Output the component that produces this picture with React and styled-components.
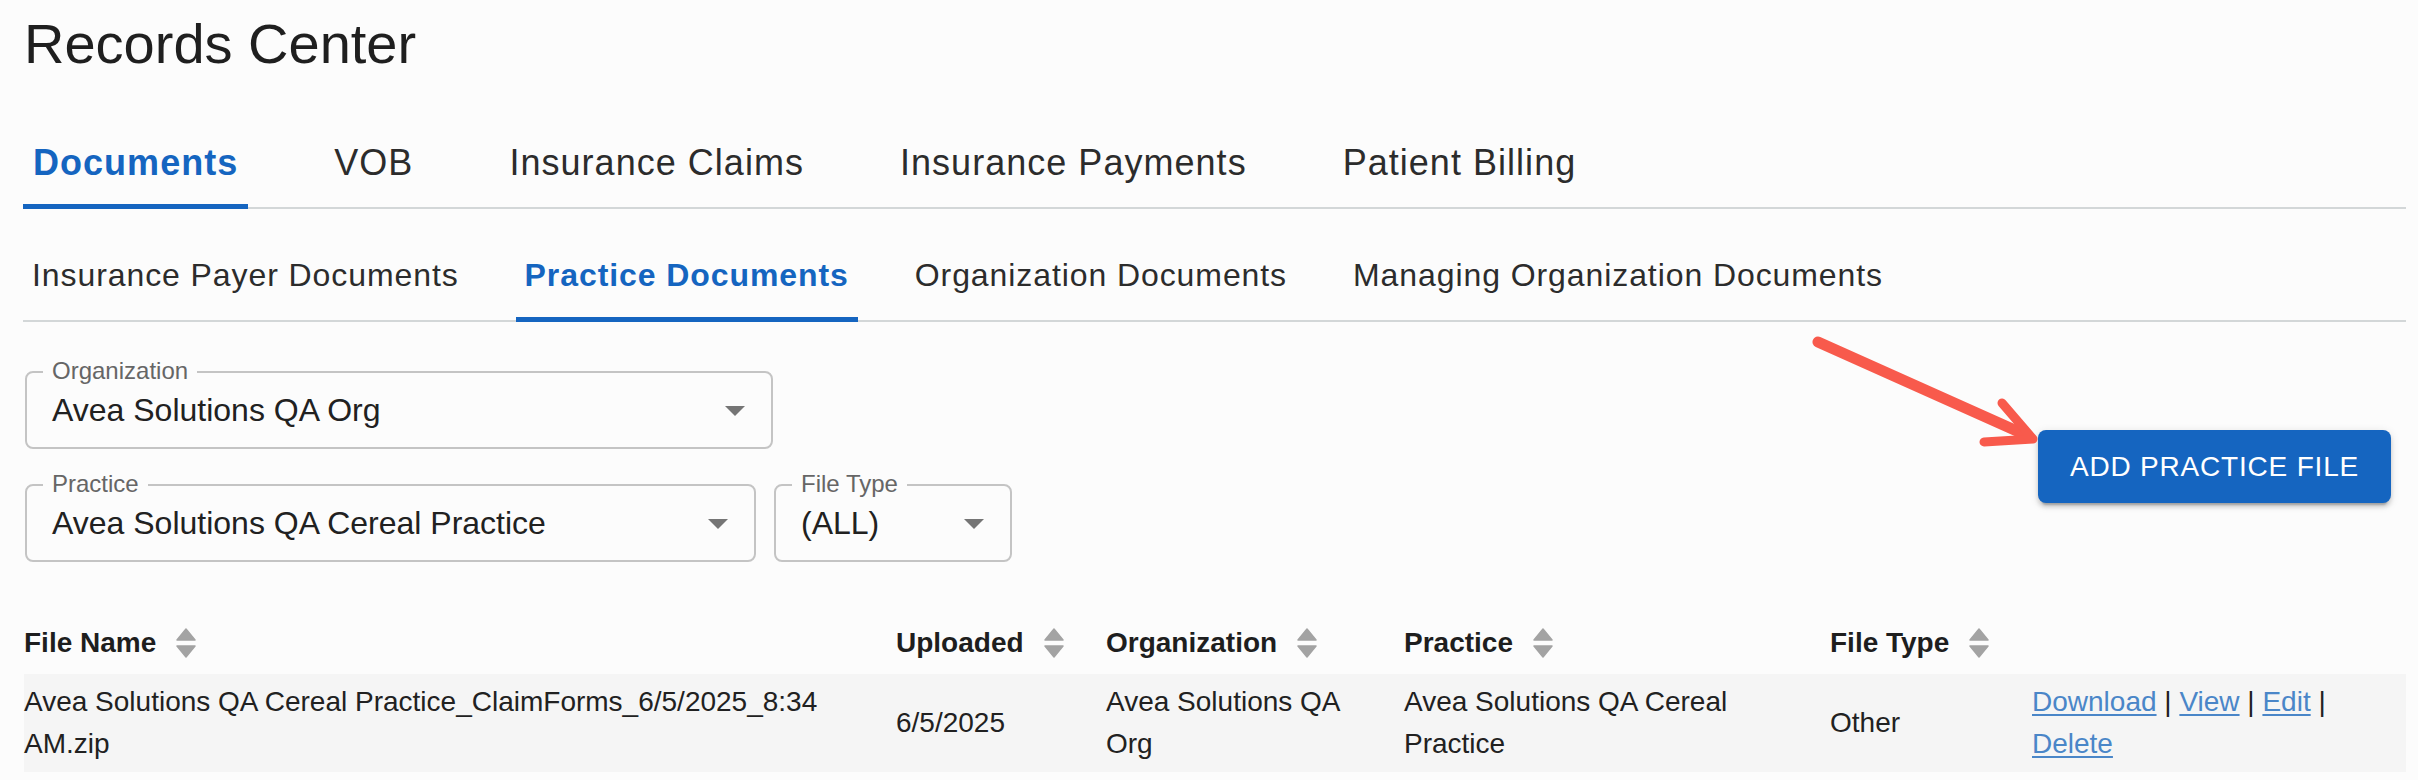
import React from "react";
import styled, { createGlobalStyle } from "styled-components";

const GlobalStyle = createGlobalStyle`
  html, body {
    margin: 0;
    padding: 0;
    background: #fcfcfc;
  }
  body {
    font-family: "Liberation Sans", Arial, Helvetica, sans-serif;
    color: #212121;
  }
  * {
    box-sizing: border-box;
  }
`;

const Page = styled.div`
  position: relative;
  width: 2418px;
  height: 780px;
  padding: 10px 12px 0 24px;
  overflow: hidden;
`;

const Title = styled.h1`
  margin: 0;
  font-size: 56px;
  font-weight: 400;
  line-height: 67px;
  color: #1f1f1f;
`;

const TabStrip = styled.div`
  display: flex;
  gap: ${(p) => p.$gap}px;
  height: 96px;
  margin-top: ${(p) => p.$top}px;
  margin-left: -1px;
  border-bottom: 2px solid #d3d7d8;
`;

const Tab = styled.div`
  position: relative;
  display: flex;
  align-items: center;
  padding: 5px ${(p) => p.$pad}px 0;
  font-size: ${(p) => p.$size}px;
  letter-spacing: 0.02857em;
  font-weight: ${(p) => (p.$active ? 700 : 400)};
  color: ${(p) => (p.$active ? "#1565c0" : "#2c2c2c")};
  white-space: nowrap;
  &::after {
    content: "";
    position: absolute;
    left: 0;
    right: 0;
    bottom: -2px;
    height: 5px;
    background: ${(p) => (p.$active ? "#1565c0" : "transparent")};
  }
`;

const FilterRow = styled.div`
  display: flex;
  align-items: center;
  justify-content: space-between;
  padding-top: 49px;
  padding-right: 15px;
`;

const Selects = styled.div`
  display: flex;
  flex-direction: column;
  gap: 35px;
  margin-left: 1px;
`;

const SelectLine = styled.div`
  display: flex;
  gap: 18px;
`;

const SelectBox = styled.div`
  position: relative;
  width: ${(p) => p.$w}px;
  height: 78px;
  border: 2px solid #c4c4c4;
  border-radius: 8px;
  display: flex;
  align-items: center;
  padding-left: 25px;
  font-size: 32px;
  color: #212121;
  white-space: nowrap;
`;

const FloatLabel = styled.span`
  position: absolute;
  left: 16px;
  top: -14px;
  padding: 0 9px;
  font-size: 24px;
  line-height: 24px;
  color: #666;
  background: #fcfcfc;
`;

const Caret = styled.svg`
  width: 48px;
  height: 48px;
  margin-left: auto;
  margin-right: 12px;
  flex-shrink: 0;
`;

const AddButton = styled.button`
  height: 73px;
  padding: 0 32px;
  background: #1565c0;
  color: #fff;
  border: none;
  border-radius: 8px;
  font-family: inherit;
  font-size: 28px;
  letter-spacing: 0.02857em;
  text-transform: uppercase;
  cursor: pointer;
  box-shadow: 0 6px 2px -4px rgba(0, 0, 0, 0.2), 0 4px 4px 0 rgba(0, 0, 0, 0.14),
    0 2px 10px 0 rgba(0, 0, 0, 0.12);
`;

const Annotation = styled.svg`
  position: absolute;
  left: 1800px;
  top: 325px;
  width: 250px;
  height: 130px;
  pointer-events: none;
`;

const Table = styled.table`
  width: 100%;
  margin-top: 50px;
  border-collapse: collapse;
  table-layout: fixed;
`;

const HeadCell = styled.th`
  height: 62px;
  padding: 0 16px 0 0;
  text-align: left;
  vertical-align: middle;
  font-size: 28px;
  font-weight: 700;
  color: #1e1e1e;
  white-space: nowrap;
`;

const HeadInner = styled.span`
  display: inline-flex;
  align-items: center;
  gap: 20px;
`;

const BodyRow = styled.tr`
  background: #f5f5f5;
`;

const Cell = styled.td`
  padding: 7px 16px 7px 0;
  font-size: 28px;
  line-height: 42px;
  vertical-align: middle;
  color: #212121;
`;

const ActionLink = styled.a`
  color: #4a86c8;
  text-decoration: underline;
  text-underline-offset: 3px;
`;

function SortIcon() {
  return (
    <svg width="20" height="30" viewBox="0 0 20 30">
      <path d="M10 1 L19 12 L1 12 Z" fill="#a3a3a3" strokeLinejoin="round" stroke="#a3a3a3" strokeWidth="1.5" />
      <path d="M1 18 L19 18 L10 29 Z" fill="#a3a3a3" strokeLinejoin="round" stroke="#a3a3a3" strokeWidth="1.5" />
    </svg>
  );
}

function Select({ label, value, width }) {
  return (
    <SelectBox $w={width}>
      <FloatLabel>{label}</FloatLabel>
      {value}
      <Caret viewBox="0 0 24 24">
        <path d="M7 10l5 5 5-5z" fill="#757575" />
      </Caret>
    </SelectBox>
  );
}

const mainTabs = ["Documents", "VOB", "Insurance Claims", "Insurance Payments", "Patient Billing"];
const subTabs = [
  "Insurance Payer Documents",
  "Practice Documents",
  "Organization Documents",
  "Managing Organization Documents",
];
const columns = [
  { name: "File Name", width: 872 },
  { name: "Uploaded", width: 210 },
  { name: "Organization", width: 298 },
  { name: "Practice", width: 426 },
  { name: "File Type", width: 202 },
  { name: "", width: 374 },
];

export default function App() {
  return (
    <>
      <GlobalStyle />
      <Page>
        <Title>Records Center</Title>

        <TabStrip $top={36} $gap={76}>
          {mainTabs.map((t, i) => (
            <Tab key={t} $size={36} $pad={10} $active={i === 0}>
              {t}
            </Tab>
          ))}
        </TabStrip>

        <TabStrip $top={17} $gap={48}>
          {subTabs.map((t, i) => (
            <Tab key={t} $size={32} $pad={9} $active={i === 1}>
              {t}
            </Tab>
          ))}
        </TabStrip>

        <FilterRow>
          <Selects>
            <Select label="Organization" value="Avea Solutions QA Org" width={748} />
            <SelectLine>
              <Select label="Practice" value="Avea Solutions QA Cereal Practice" width={731} />
              <Select label="File Type" value="(ALL)" width={238} />
            </SelectLine>
          </Selects>
          <AddButton>Add Practice File</AddButton>
        </FilterRow>

        <Annotation viewBox="0 0 250 130">
          <line x1="18" y1="17" x2="228" y2="111" stroke="#f85a4c" strokeWidth="11" strokeLinecap="round" />
          <polyline
            points="202,78 233,114 184,117"
            fill="none"
            stroke="#f85a4c"
            strokeWidth="9"
            strokeLinecap="round"
            strokeLinejoin="round"
          />
        </Annotation>

        <Table>
          <colgroup>
            {columns.map((c, i) => (
              <col key={i} style={{ width: c.width }} />
            ))}
          </colgroup>
          <thead>
            <tr>
              {columns.map((c, i) => (
                <HeadCell key={i}>
                  {c.name && (
                    <HeadInner>
                      {c.name}
                      <SortIcon />
                    </HeadInner>
                  )}
                </HeadCell>
              ))}
            </tr>
          </thead>
          <tbody>
            <BodyRow>
              <Cell>Avea Solutions QA Cereal Practice_ClaimForms_6/5/2025_8:34 AM.zip</Cell>
              <Cell>6/5/2025</Cell>
              <Cell>Avea Solutions QA Org</Cell>
              <Cell>Avea Solutions QA Cereal Practice</Cell>
              <Cell>Other</Cell>
              <Cell>
                <ActionLink href="#">Download</ActionLink> | <ActionLink href="#">View</ActionLink> |{" "}
                <ActionLink href="#">Edit</ActionLink> | <ActionLink href="#">Delete</ActionLink>
              </Cell>
            </BodyRow>
          </tbody>
        </Table>
      </Page>
    </>
  );
}
